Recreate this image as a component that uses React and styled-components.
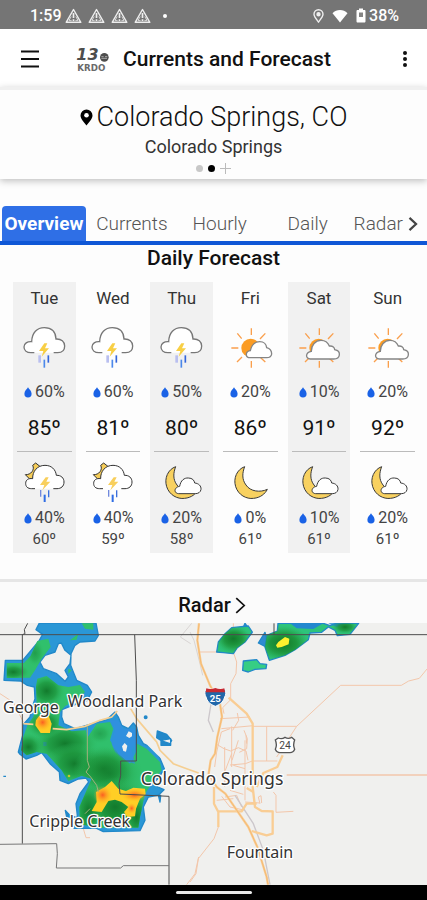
import React from "react";
import styled, { createGlobalStyle, css } from "styled-components";

const GlobalStyle = createGlobalStyle`
  * {
    box-sizing: border-box;
  }
  body {
    margin: 0;
    background: #fdfdfd;
    color: #111;
    font-family: Roboto, "Liberation Sans", sans-serif;
  }
  h1, h2, h3, p, ul {
    margin: 0;
    padding: 0;
    font-weight: 400;
  }
  button {
    display: inline-flex;
    align-items: center;
    justify-content: center;
    padding: 0;
    border: 0;
    background: none;
    color: inherit;
    font: inherit;
    cursor: pointer;
  }
  svg {
    display: block;
    flex: none;
  }
`;

const tabs = ["Overview", "Currents", "Hourly", "Daily", "Radar"];

const days = [
  { day: "Tue", icon: "storm", rain: 60, high: 85, nightIcon: "nightStorm", nightRain: 40, low: 60 },
  { day: "Wed", icon: "storm", rain: 60, high: 81, nightIcon: "nightStorm", nightRain: 40, low: 59 },
  { day: "Thu", icon: "storm", rain: 50, high: 80, nightIcon: "nightCloud", nightRain: 20, low: 58 },
  { day: "Fri", icon: "mostlySunny", rain: 20, high: 86, nightIcon: "moon", nightRain: 0, low: 61 },
  { day: "Sat", icon: "partlySunny", rain: 10, high: 91, nightIcon: "nightCloud", nightRain: 10, low: 61 },
  { day: "Sun", icon: "partlySunny", rain: 20, high: 92, nightIcon: "nightCloud", nightRain: 20, low: 61 },
];

/* ---------- small icons ---------- */

const AlertIcon = () => (
  <svg width="17" height="16" viewBox="0 0 17 16" fill="none" stroke="#eee" strokeWidth="1.4">
    <path d="M8.5 1.5 15.8 14.3H1.2Z" strokeLinejoin="round" />
    <path d="M8.5 5v5M8.5 11.3v1.6" strokeWidth="1.7" />
    <path d="M6.2 8.5 4 12.4h2.6M10.8 8.5l2.2 3.9h-2.6" strokeWidth="0.8" />
  </svg>
);

const StatusPinIcon = () => (
  <svg width="11" height="14" viewBox="0 0 11 14" fill="none" stroke="#eee" strokeWidth="1.4">
    <path d="M5.5 13C3 9.8 1 7.6 1 5.3a4.5 4.5 0 0 1 9 0C10 7.6 8 9.8 5.5 13Z" />
    <circle cx="5.5" cy="5.3" r="1.5" fill="#eee" />
  </svg>
);

const WifiIcon = () => (
  <svg width="16" height="14" viewBox="0 0 16 14" fill="#fff">
    <path d="M8 13.5.5 4.2C2.6 2 5.2.9 8 .9s5.4 1.1 7.5 3.3Z" />
  </svg>
);

const BatteryIcon = () => (
  <svg width="10" height="15" viewBox="0 0 10 15">
    <path d="M3 .5h4V2h1.5c.5 0 1 .5 1 1v10.5c0 .5-.5 1-1 1h-7c-.5 0-1-.5-1-1V3c0-.5.5-1 1-1H3Z" fill="#fff" />
    <path d="M3 4.5h4V9H3Z" fill="#858585" />
  </svg>
);

const MenuIcon = () => (
  <svg width="20" height="20" viewBox="0 0 20 20" stroke="#111" strokeWidth="2">
    <path d="M1 2.5h18M1 10h18M1 17.5h18" />
  </svg>
);

const MoreIcon = () => (
  <svg width="6" height="18" viewBox="0 0 6 18" fill="#111">
    <circle cx="3" cy="3" r="2" />
    <circle cx="3" cy="9" r="2" />
    <circle cx="3" cy="15" r="2" />
  </svg>
);

const StationLogo = () => (
  <svg width="34" height="28" viewBox="0 0 102 84" fill="#4d4d4d" role="img" aria-label="13 KRDO">
    <text x="1" y="45" fontFamily="DejaVu Sans, sans-serif" fontWeight="700" fontStyle="italic" fontSize="48">
      13
    </text>
    <circle cx="85" cy="37" r="13" />
    <path d="M76 35h7M87 35h7M76 40h17" stroke="#bbb" strokeWidth="2.5" />
    <text x="4" y="79" fontFamily="DejaVu Sans, sans-serif" fontWeight="700" fontSize="26" fill="#6a6a6a">
      KRDO
    </text>
  </svg>
);

const PinIcon = () => (
  <svg width="13" height="17" viewBox="0 0 13 17">
    <path d="M6.5 16.5C4 13 .5 9.7.5 6.5a6 6 0 0 1 12 0c0 3.2-3.5 6.5-6 10Z" fill="#000" />
    <circle cx="6.5" cy="6.2" r="2.3" fill="#fff" />
  </svg>
);

const ChevronIcon = ({ width = 10, height = 16, color = "#111", stroke = 2 }) => (
  <svg width={width} height={height} viewBox="0 0 10 16" fill="none" stroke={color} strokeWidth={stroke}>
    <path d="M1 1l7.5 7L1 15" />
  </svg>
);

const DropIcon = () => (
  <svg width="8" height="11" viewBox="0 0 8 11" fill="#1a62e6">
    <path d="M4 .3C5 2.2 7.6 3.9 7.6 6.7a3.6 3.8 0 0 1-7.2 0C.4 3.9 3 2.2 4 .3Z" />
  </svg>
);

/* ---------- weather icons, all on a 141 x 132 grid ---------- */

const BIG_CLOUD =
  "M40 80H30C16 80 9 72 9 63C9 52 19 46 32 47C33 20 48 5 70 5C92 5 104 18 105 39C121 38 131 47 131 60C131 73 122 80 110 80H98";
const MOON =
  "M53 20C30 28 18 55 26 80C34 105 58 118 80 115C100 113 114 102 121 88C100 98 70 95 57 75C44 58 46 38 53 20Z";

const Storm = () => (
  <>
    <path d={BIG_CLOUD} fill="#fff" stroke="#777" strokeWidth="4" />
    <path d="M70 52 54 75h13l-5 17 22-25H72l7-15Z" fill="#f8cf45" />
    <path d="M56 88v22" stroke="#b9bff0" strokeWidth="8" />
    <path d="M70 101v24" stroke="#4c88ea" strokeWidth="5" />
    <path d="M82 88v22" stroke="#3265dc" strokeWidth="5" />
  </>
);

const NightStorm = () => (
  <>
    <path
      d="M44 9 58 20C58 37 48 54 26 57L13 44C30 45 42 29 35 16Z"
      fill="#f6cd58"
      stroke="#333"
      strokeWidth="3"
    />
    <path
      d="M42 86H32C20 86 14 80 14 70C14 60 22 54 35 56C34 34 49 16 72 16C91 16 104 28 106 46C120 45 129 54 129 66C129 79 120 86 108 86H97"
      fill="#fff"
      stroke="#333"
      strokeWidth="3"
    />
    <path d="M74 52 57 75h13l-6 16 24-26H76l7-13Z" fill="#f8cf5c" />
    <path d="M59 90v20" stroke="#7189dd" strokeWidth="4" />
    <path d="M71 104v22" stroke="#2f6de4" strokeWidth="6" />
    <path d="M83 91v21" stroke="#3c70dc" strokeWidth="4" />
  </>
);

const SunRays = () => (
  <path
    d="M73 7v20M73 105v20M13 66h21M31 22l13 16M115 22 99 39M30 108l15-15M101 95l14 13"
    stroke="#fa9f4c"
    strokeWidth="4"
  />
);

const MostlySunny = () => (
  <>
    <SunRays />
    <circle cx="71" cy="66" r="28" fill="#fb9c24" />
    <path
      d="M70 95C54 95 54 76 70 74C74 56 84 47 98 47C111 47 118 56 119 65C129 68 134 76 134 84C133 92 127 95 119 95Z"
      fill="#fff"
      stroke="#858585"
      strokeWidth="4"
    />
  </>
);

const PartlySunny = () => (
  <>
    <SunRays />
    <circle cx="71" cy="66" r="28" fill="#fb9c24" />
    <path
      d="M46 99C30 98 31 79 49 76C49 57 61 43 78 43C91 43 99 50 103 60C114 59 119 65 119 71C129 73 134 80 133 87C132 95 125 99 116 99Z"
      fill="#fff"
      stroke="#858585"
      strokeWidth="4"
    />
  </>
);

const Moon = () => <path d={MOON} fill="#f8d160" stroke="#3a3a3a" strokeWidth="3" />;

const NightCloud = () => (
  <>
    <Moon />
    <path
      d="M62 101C47 100 47 82 65 79C68 61 79 53 91 54C103 54 109 61 110 69C122 70 130 78 129 88C128 97 120 101 112 101Z"
      fill="#fff"
      stroke="#3a3a3a"
      strokeWidth="3"
    />
  </>
);

const glyphs = {
  storm: Storm,
  nightStorm: NightStorm,
  mostlySunny: MostlySunny,
  partlySunny: PartlySunny,
  moon: Moon,
  nightCloud: NightCloud,
};

const WeatherIcon = ({ name }) => {
  const Glyph = glyphs[name];
  return (
    <svg width="47" height="44" viewBox="0 0 141 132" fill="none" aria-hidden="true">
      <Glyph />
    </svg>
  );
};

const Rain = ({ value, label }) => (
  <RainRow aria-label={label}>
    <DropIcon />
    {value}%
  </RainRow>
);

/* ---------- radar map ---------- */

// areas of moderate rain, also used to clip the darker cores
const WEST_RAIN =
  "M112 62 145 55 152 80 125 115 105 150 90 172 20 173V128L72 128 92 106ZM112 175 140 167 175 195 205 200 240 194 255 215 235 235 195 258 180 275 175 315 215 333 258 330 262 352 290 310 330 305 340 325 330 360 355 400 390 430 408 395 412 370 440 385 480 425 485 450 458 485 435 520 420 590 415 622H295L240 612 238 560 260 510 275 475 245 466 205 482 185 450 140 400 110 395 80 405 63 390 70 350 82 315 100 290 110 245 108 200ZM245 9H280V28L255 25ZM210 60 235 40 230 58ZM205 145 215 150 205 160Z";
const NORTH_RAIN = "M650 95 655 65 675 40 695 22 745 17 757 35 735 65 712 82 700 100 670 97Z";
const EAST_RAIN =
  "M834 9H970L990 16 1008 9H1076L1050 42 1012 46 1005 30 985 20 965 36 930 38 925 58 885 88 855 105 808 120 795 80 800 45 832 32Z";
const I25 =
  "M597 9 592 60 603 130 630 195 660 250 666 290 652 350 645 400 632 420 626 460 650 500 676 520 745 620 772 680 800 770 804 793";

const RadarMap = () => (
  <MapSvg viewBox="0 8 1281 786" preserveAspectRatio="xMidYMid slice" role="img" aria-label="Radar map">
    <defs>
      <radialGradient id="dark">
        <stop offset="0" stopColor="#127a2c" />
        <stop offset="0.5" stopColor="#1c933a" stopOpacity="0.75" />
        <stop offset="1" stopColor="#2fb85f" stopOpacity="0" />
      </radialGradient>
      <radialGradient id="hot">
        <stop offset="0" stopColor="#fb5d22" />
        <stop offset="1" stopColor="#ffb01f" stopOpacity="0" />
      </radialGradient>
      <clipPath id="rain">
        <path d={WEST_RAIN + NORTH_RAIN + EAST_RAIN} />
      </clipPath>
    </defs>
    <rect y="8" width="1281" height="786" fill="#f0f0ee" />

    {/* minor roads */}
    <g fill="none" stroke="#f3c7ab" strokeWidth="3">
      <path d="M0 220 40 246 70 305M250 625 258 652 270 652M560 793 585 760 596 710" />
      <path d="M594 95H700M700 9V95L710 125 708 160 692 190V235" />
      <path d="M758 318H890L1022 195H1204L1226 182 1258 174 1281 146M890 318 830 410" />
      <path d="M800 318V422M660 295 750 290M664 325 760 316M672 280 668 262 690 240" />
      <path d="M650 372 672 385 692 392 715 382 738 392 744 420M738 345 740 370M695 318V440M712 278 716 300 698 330" />
      <path d="M718 396 740 385 742 355 732 330M644 440 650 395 664 335 690 325" />
      <path d="M760 422H832M735 360V540M674 380V500M695 400 676 450 674 495M715 360 696 420M700 435 735 445M757 422 736 430 690 434" />
      <path d="M860 464 1281 464" strokeWidth="4" />
      <path d="M780 550 775 530 783 526 785 548M735 545 780 548M820 515 828 525V576L880 573" />
      <path d="M655 620 642 655 595 715 588 760 570 785" />
      <path d="M675 530 710 525 725 560M690 510 730 522M665 528 690 560 735 570M650 540 700 535" />
    </g>
    <path d="M570 35 582 60 600 130 608 165M575 9 541 50 572 70" fill="none" stroke="#d9d5d4" strokeWidth="3" />
    <path d="M634 245 625 300 640 335M705 525 760 610 790 690 810 793" fill="none" stroke="#ccc7cb" strokeWidth="4" />

    {/* highways */}
    <g fill="none" stroke="#f9cd94" strokeWidth="7" strokeLinejoin="round">
      <path d={I25} />
      <path d="M686 232 740 280 758 310V500L765 560 785 572 818 573V640L800 645 755 632" />
      <path d="M642 500V550L655 575V620M655 573H725L740 550H770M848 405 832 440 790 458 770 500M740 503 760 515" />
    </g>
    <path d={I25} fill="none" stroke="#f5ba73" strokeWidth="3" strokeLinejoin="round" />

    {/* precipitation */}
    <g stroke="#2188c9" strokeWidth="4" strokeLinejoin="round">
      <path
        fill="#2a97d6"
        fillRule="evenodd"
        d="M118 8 108 28 128 42 118 60 95 88 68 120H16L12 180 62 182 82 195 103 200 105 235 97 260 90 290 70 312 68 345 60 375 55 395 60 402 78 416 110 405 125 397 150 430 178 455 180 480 205 490 235 476 258 473 266 485 240 520 228 550 232 585 222 624 290 624 310 634 420 631 435 600 430 560 445 530 476 524 492 508 474 500 460 490 478 470 493 445 476 405 455 382 430 370 415 345 410 320 400 308 385 325 365 315 355 290 345 275 320 298 270 312 225 325 192 310 185 290 186 268 210 258 262 240 275 215 262 195 230 180 220 155 212 135 213 100 225 75 240 65 285 62 295 45 288 8ZM184 68 195 90 213 105 210 130 195 150 205 170 195 183 170 160 130 145 120 125 135 105 165 95 175 70Z"
      />
      <path fill="#2f8bd0" d="M735 9 755 38 733 60 720 45ZM795 36 775 68 795 78 815 105Z" />
      <path fill="#2dc47b" d={NORTH_RAIN} />
      <path fill="#2dc47b" d={EAST_RAIN} />
      <path fill="#36cd84" d="M730 122 770 118 780 130 800 132 798 145 765 147 745 155 728 150Z" />
      <path fill="#2388c9" d="M472 332 500 342 515 360 510 370 485 362 470 352ZM483 360V375H512V355ZM196 570 210 585 225 590 200 590ZM475 524 480 545 482 525ZM10 468H18" />
      <circle cx="437" cy="291" r="4" fill="#2388c9" />
    </g>
    <path d="M870 9H970L940 26 890 24ZM985 9H1040L1010 20Z" fill="#2388cf" />
    <path fill="#30c06c" d={WEST_RAIN} />
    <path fill="#3090df" d="M330 300 355 300 370 325 405 325 412 360 395 390 405 430 370 420 345 395 335 370 345 325ZM130 365h10v12h-10Z" />
    <g fill="url(#dark)" clipPath="url(#rain)">
      <ellipse cx="40" cy="155" rx="48" ry="26" />
      <ellipse cx="140" cy="212" rx="56" ry="52" />
      <ellipse cx="105" cy="98" rx="28" ry="40" opacity="0.5" />
      <ellipse cx="85" cy="380" rx="46" ry="42" />
      <ellipse cx="195" cy="370" rx="100" ry="66" />
      <ellipse cx="225" cy="430" rx="90" ry="64" />
      <ellipse cx="310" cy="445" rx="90" ry="70" />
      <ellipse cx="330" cy="460" rx="100" ry="80" opacity="0.6" />
      <ellipse cx="135" cy="310" rx="58" ry="46" />
      <ellipse cx="350" cy="560" rx="110" ry="90" />
      <ellipse cx="345" cy="560" rx="80" ry="70" />
      <ellipse cx="265" cy="570" rx="44" ry="85" />
      <ellipse cx="410" cy="590" rx="34" ry="66" />
      <ellipse cx="300" cy="340" rx="36" ry="30" opacity="0.4" />
      <ellipse cx="700" cy="58" rx="56" ry="46" />
      <ellipse cx="700" cy="55" rx="50" ry="36" />
      <ellipse cx="850" cy="72" rx="84" ry="56" />
      <ellipse cx="850" cy="68" rx="78" ry="52" />
      <ellipse cx="1035" cy="20" rx="40" ry="22" />
    </g>
    <path
      fill="#ffce25"
      d="M118 286 145 284 155 310 150 338 122 338 106 315 108 300ZM335 482 355 505 378 512 400 502 435 505 437 522 420 535 408 565 405 588 382 590 372 575 385 560 365 545 345 538 325 542 305 575 275 572 290 545 288 515 315 500Z"
    />
    <path fill="#fdf02f" d="M828 75 835 65 855 50 868 55 866 72 845 80 832 82Z" />
    <circle cx="207" cy="467" r="4" fill="#c3c92a" />
    <g fill="url(#hot)">
      <ellipse cx="128" cy="306" rx="26" ry="26" />
      <ellipse cx="308" cy="524" rx="28" ry="28" />
      <ellipse cx="403" cy="524" rx="38" ry="20" />
      <ellipse cx="395" cy="564" rx="14" ry="16" />
    </g>
    <path
      fill="#f0f0ee"
      d="M355 270 372 300 390 315 402 295 390 275ZM386 333l10 5v10l-8 5-10-6ZM374 368l8 8-4 18-8-2-4-14ZM440 372 470 402 495 425 488 400 460 375Z"
    />

    <path
      d="M70 310 100 312M158 325 200 328 255 318 300 300 335 290 352 272M392 265 410 295 440 330 470 365 480 390 505 415 520 430 560 445 596 458"
      fill="none"
      stroke="#f5cf92"
      strokeWidth="5"
    />
    <path d="M262 318V420L268 440 258 455 272 470 290 495 295 515M270 565 255 580" fill="none" stroke="#a4b07c" strokeWidth="3" />

    {/* county lines */}
    <g fill="none" stroke="#4c4c4c" strokeWidth="3">
      <path d="M0 43H1281M67 43V670M67 43 75 40 73 28 83 9M404 43 409 180V422H362V465L357 490 360 521 507 528V793" />
      <path d="M822 9V43" />
      <path d="M0 672 170 670 172 700 169 743H362L370 736H507" stroke="#777" />
    </g>

    {/* route shields */}
    <path d="M618 206h56c5 8 4 18 0 24-6 20-16 22-28 28-12-6-22-8-28-28-4-6-5-16 0-24Z" fill="#2167a9" stroke="#fff" strokeWidth="3" />
    <path d="M619 204q13 4 27-1 14 5 27 1l2 12h-58Z" fill="#c62a32" />
    <text x="646" y="245" textAnchor="middle" fontFamily="Roboto, sans-serif" fontWeight="700" fontSize="29" fill="#fff">
      25
    </text>
    <path
      d="M835 353q10 5 20-2 10 6 20 0l9 8q-6 14 0 28-4 10-14 10h-30q-10 0-14-10 6-14 0-28Z"
      fill="#fff"
      stroke="#555"
      strokeWidth="4"
    />
    <text x="855" y="386" textAnchor="middle" fontFamily="Roboto, sans-serif" fontSize="31" fill="#444">
      24
    </text>

    <PlaceName x="9" y="279">George</PlaceName>
    <PlaceName x="203" y="260">Woodland Park</PlaceName>
    <PlaceName x="422" y="493" $city>
      Colorado Springs
    </PlaceName>
    <PlaceName x="88" y="620">Cripple Creek</PlaceName>
    <PlaceName x="680" y="712">Fountain</PlaceName>
  </MapSvg>
);

const App = () => (
  <>
    <GlobalStyle />
    <Page>
      <StatusBar>
        <StatusGroup>
          <span>1:59</span>
          <AlertIcon />
          <AlertIcon />
          <AlertIcon />
          <AlertIcon />
          <StatusDot />
        </StatusGroup>
        <StatusGroup $wide>
          <StatusPinIcon />
          <WifiIcon />
          <Battery>
            <BatteryIcon />
            38%
          </Battery>
        </StatusGroup>
      </StatusBar>

      <AppBar>
        <IconButton aria-label="Menu">
          <MenuIcon />
        </IconButton>
        <Brand>
          <StationLogo />
          <h1>Currents and Forecast</h1>
        </Brand>
        <IconButton aria-label="More options">
          <MoreIcon />
        </IconButton>
      </AppBar>

      <LocationCard>
        <LocationName>
          <PinIcon />
          Colorado Springs, CO
        </LocationName>
        <LocationSub>Colorado Springs</LocationSub>
        <Pager>
          <PagerDot aria-label="Location 1" />
          <PagerDot aria-label="Location 2" $active />
          <button aria-label="Add location">
            <svg width="11" height="11" viewBox="0 0 11 11" stroke="#bbb">
              <path d="M5.5 0v11M0 5.5h11" />
            </svg>
          </button>
        </Pager>
      </LocationCard>

      <Tabs role="tablist">
        {tabs.map((tab, i) => (
          <Tab key={tab} role="tab" aria-selected={i === 0} $active={i === 0}>
            {tab}
            {tab === "Radar" && <ChevronIcon width={10} height={14} color="#444" stroke={2.5} />}
          </Tab>
        ))}
      </Tabs>

      <SectionTitle>Daily Forecast</SectionTitle>
      <Forecast>
        {days.map((d, i) => (
          <Day key={d.day} $shaded={i === 0 || i === 2 || i === 4}>
            <DayName>{d.day}</DayName>
            <WeatherIcon name={d.icon} />
            <Rain value={d.rain} label="Chance of rain, day" />
            <High>{d.high}º</High>
            <Night>
              <WeatherIcon name={d.nightIcon} />
              <Rain value={d.nightRain} label="Chance of rain, night" />
              <Low>{d.low}º</Low>
            </Night>
          </Day>
        ))}
      </Forecast>

      <RadarHeader>
        <RadarLink href="#radar">
          Radar
          <ChevronIcon width={11} height={17} stroke={1.6} />
        </RadarLink>
      </RadarHeader>
      <RadarMap />
      <NavBar>
        <NavHandle />
      </NavBar>
    </Page>
  </>
);

const Page = styled.main`
  display: flex;
  flex-direction: column;
  min-height: 100vh;
`;

const StatusBar = styled.div`
  display: flex;
  align-items: center;
  justify-content: space-between;
  height: 29px;
  padding: 2px 28px 0 30px;
  background: #757575;
  color: #fff;
  font-size: 16px;
  font-weight: 500;
`;

const StatusGroup = styled.div`
  display: flex;
  align-items: center;
  gap: ${({ $wide }) => ($wide ? "8px" : "6px")};
  span:first-child {
    margin-right: -3px;
  }
`;

const StatusDot = styled.span`
  width: 4px;
  height: 4px;
  margin-left: 6px;
  border-radius: 50%;
  background: #fff;
`;

const Battery = styled.span`
  display: flex;
  align-items: center;
  gap: 3px;
`;

const AppBar = styled.header`
  display: flex;
  align-items: center;
  height: 58px;
  padding: 2px 15px 0 20px;
  background: #fff;
`;

const IconButton = styled.button`
  min-width: 14px;
  height: 40px;
`;

const Brand = styled.div`
  display: flex;
  flex: 1;
  align-items: center;
  gap: 13px;
  padding-left: 36px;
  h1 {
    font-size: 21px;
    font-weight: 500;
    line-height: 28px;
    white-space: nowrap;
  }
`;

const LocationCard = styled.section`
  display: flex;
  flex-direction: column;
  align-items: center;
  padding: 12px 0 4px;
  border-top: 3px solid #f0f0f0;
  background: #fdfdfd;
  box-shadow: 0 2px 7px rgba(0, 0, 0, 0.25);
`;

const LocationName = styled.h2`
  display: flex;
  align-items: center;
  gap: 4px;
  font-size: 27px;
  font-weight: 300;
  line-height: 30px;
`;

const LocationSub = styled.p`
  line-height: 30px;
  font-size: 18px;
  color: #333;
`;

const Pager = styled.div`
  display: flex;
  align-items: center;
  gap: 5px;
  height: 13px;
`;

const PagerDot = styled.button`
  width: 7px;
  height: 7px;
  border-radius: 50%;
  && {
    background: ${({ $active }) => ($active ? "#000" : "#c8c8c8")};
  }
`;

const Tabs = styled.nav`
  display: grid;
  grid-template-columns: repeat(4, 8fr) 7fr;
  gap: 4px;
  margin-top: 27px;
  padding-left: 2px;
  border-bottom: 4px solid #0f57d6;
`;

const Tab = styled.button`
  && {
    min-width: 0;
    height: 35px;
    gap: 5px;
    color: #555;
    font-size: 19px;
    font-weight: 300;
    &:last-child {
      justify-content: flex-start;
    }
    ${({ $active }) =>
      $active &&
      css`
        border-radius: 4px 4px 0 0;
        background: #2f6fe6;
        color: #fff;
        font-weight: 700;
      `}
  }
`;

const SectionTitle = styled.h2`
  font-size: 21px;
  font-weight: 500;
  line-height: 26px;
  text-align: center;
`;

const Forecast = styled.ul`
  display: grid;
  grid-template-columns: repeat(6, 1fr);
  gap: 6px;
  margin-top: 11px;
  padding: 0 8px 26px 13px;
  border-bottom: 3px solid #e6e6e6;
  list-style: none;
`;

const RainRow = styled.p`
  display: flex;
  align-items: center;
  gap: 3px;
  color: #444;
  font-size: 16px;
  line-height: 20px;
`;

const Day = styled.li`
  display: flex;
  flex-direction: column;
  align-items: center;
  padding: 4px 4px 3px;
  background: ${({ $shaded }) => ($shaded ? "#f1f1f1" : "transparent")};
  > ${RainRow} {
    margin-top: 12px;
  }
`;

const DayName = styled.h3`
  margin-bottom: 16px;
  color: #333;
  font-size: 17px;
  line-height: 24px;
`;

const High = styled.p`
  margin: 12px 0 9px;
  font-size: 21px;
  line-height: 28px;
`;

const Night = styled.div`
  display: flex;
  flex-direction: column;
  align-items: center;
  align-self: stretch;
  padding-top: 8px;
  border-top: 1px solid #bbb;
  > ${RainRow} {
    margin-top: 4px;
  }
`;

const Low = styled.p`
  color: #444;
  font-size: 15px;
  line-height: 22px;
`;

const RadarHeader = styled.div`
  display: flex;
  justify-content: center;
  padding: 9px 3px 4px 0;
  background: #fbfbfb;
`;

const RadarLink = styled.a`
  display: flex;
  align-items: center;
  gap: 4px;
  color: #111;
  font-size: 20px;
  font-weight: 500;
  line-height: 28px;
  text-decoration: none;
`;

const MapSvg = styled.svg`
  width: 100%;
  height: 262px;
`;

const PlaceName = styled.text`
  fill: #333;
  stroke: #fff;
  stroke-width: 8px;
  stroke-linejoin: round;
  paint-order: stroke;
  font-family: "Noto Sans", sans-serif;
  font-size: ${({ $city }) => ($city ? "53px" : "48px")};
`;

const NavBar = styled.div`
  display: flex;
  flex: 1;
  align-items: center;
  justify-content: center;
  min-height: 15px;
  background: #000;
`;

const NavHandle = styled.span`
  width: 76px;
  height: 3px;
  border-radius: 2px;
  background: #e8e8e8;
`;

export default App;
